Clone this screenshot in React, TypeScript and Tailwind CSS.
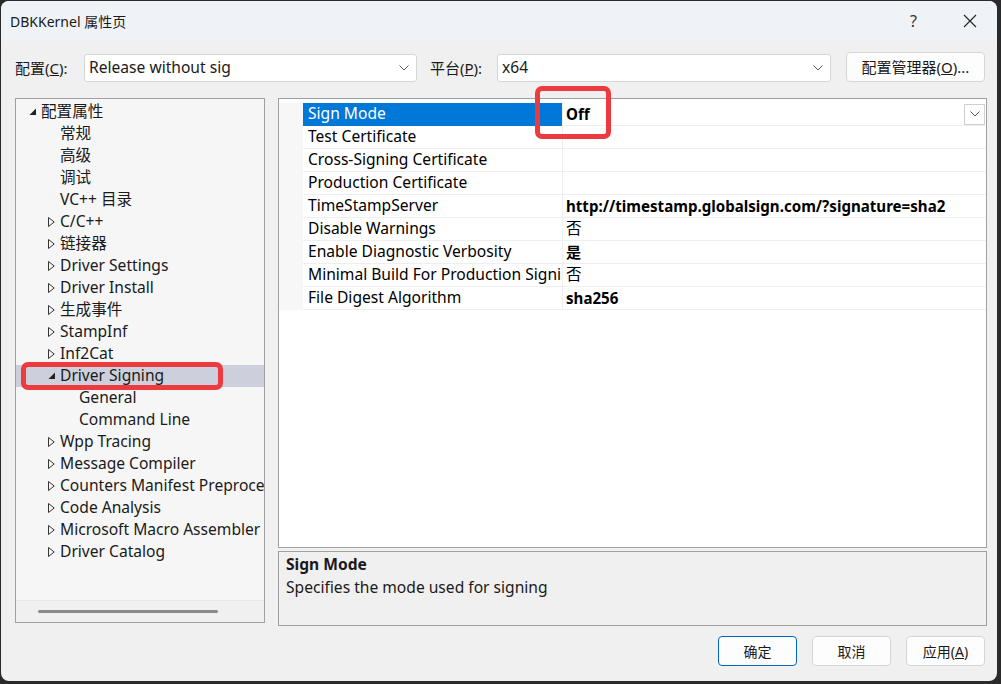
import React from "react"

const FONT = "font-['Segoe_UI','Noto_Sans','Noto_Sans_CJK_SC',sans-serif]"

interface TreeItem {
  label: string
  depth: 0 | 1 | 2
  arrow?: "open" | "closed"
  selected?: boolean
}

const TREE: TreeItem[] = [
  { label: "配置属性", depth: 0, arrow: "open" },
  { label: "常规", depth: 1 },
  { label: "高级", depth: 1 },
  { label: "调试", depth: 1 },
  { label: "VC++ 目录", depth: 1 },
  { label: "C/C++", depth: 1, arrow: "closed" },
  { label: "链接器", depth: 1, arrow: "closed" },
  { label: "Driver Settings", depth: 1, arrow: "closed" },
  { label: "Driver Install", depth: 1, arrow: "closed" },
  { label: "生成事件", depth: 1, arrow: "closed" },
  { label: "StampInf", depth: 1, arrow: "closed" },
  { label: "Inf2Cat", depth: 1, arrow: "closed" },
  { label: "Driver Signing", depth: 1, arrow: "open", selected: true },
  { label: "General", depth: 2 },
  { label: "Command Line", depth: 2 },
  { label: "Wpp Tracing", depth: 1, arrow: "closed" },
  { label: "Message Compiler", depth: 1, arrow: "closed" },
  { label: "Counters Manifest Preprocessor", depth: 1, arrow: "closed" },
  { label: "Code Analysis", depth: 1, arrow: "closed" },
  { label: "Microsoft Macro Assembler", depth: 1, arrow: "closed" },
  { label: "Driver Catalog", depth: 1, arrow: "closed" },
]

const INDENT = ["pl-[13px]", "pl-[32px]", "pl-[51px]"]

interface Prop {
  name: string
  value: string
  bold?: boolean
}

const PROPS: Prop[] = [
  { name: "Sign Mode", value: "Off", bold: true },
  { name: "Test Certificate", value: "" },
  { name: "Cross-Signing Certificate", value: "" },
  { name: "Production Certificate", value: "" },
  { name: "TimeStampServer", value: "http://timestamp.globalsign.com/?signature=sha2", bold: true },
  { name: "Disable Warnings", value: "否" },
  { name: "Enable Diagnostic Verbosity", value: "是", bold: true },
  { name: "Minimal Build For Production Signing", value: "否" },
  { name: "File Digest Algorithm", value: "sha256", bold: true },
]

const Chevron = ({ className = "" }: { className?: string }) => (
  <svg width="10" height="6" viewBox="0 0 10 6" className={className}>
    <path d="M0.5 0.5 L5 5 L9.5 0.5" fill="none" stroke="#555" strokeWidth="1" />
  </svg>
)

const Arrow = ({ kind }: { kind?: "open" | "closed" }) => {
  if (kind === "open")
    return (
      <svg width="8" height="8" viewBox="0 0 8 8">
        <path d="M7 0.5 L7 7 L0.5 7 Z" fill="#222" />
      </svg>
    )
  if (kind === "closed")
    return (
      <svg width="7" height="10" viewBox="0 0 7 10">
        <path d="M0.5 0.5 L6.2 5 L0.5 9.5 Z" fill="none" stroke="#333" strokeWidth="1" />
      </svg>
    )
  return null
}

const Combo = ({ value, w }: { value: string; w: string }) => (
  <div className={`${w} h-[28px] bg-white border border-[#d5d5d5] rounded-[3px] flex items-center pl-[4px] pr-[7px]`}>
    <span className="flex-1 text-[15.6px] text-[#1a1a1a]">{value}</span>
    <Chevron />
  </div>
)

const Btn = ({ children, focus }: { children: React.ReactNode; focus?: boolean }) => (
  <div
    className={`w-[79px] h-[30px] rounded-[4px] flex items-center justify-center text-[14px] text-[#1a1a1a] bg-[#fdfdfd] border ${
      focus ? "border-[#0067c0]" : "border-[#d4d4d4]"
    }`}
  >
    {children}
  </div>
)

export default function App() {
  return (
    <div className={`w-[1001px] h-[684px] bg-[#2a2a2a] pt-px pl-px pr-[4px] pb-[3px] ${FONT}`}>
      <div className="relative h-full rounded-lg bg-[#f0f0f0] flex flex-col overflow-hidden">
        {/* title bar */}
        <div className="h-[40px] shrink-0 bg-[#eff3f8] flex items-center pl-[9px] pr-[20px]">
          <span className="flex-1 text-[14px] text-[#1a1a1a]">DBKKernel 属性页</span>
          <span className="text-[16px] text-[#333] mr-[46px]">?</span>
          <svg width="14" height="14" viewBox="0 0 14 14">
            <path d="M1 1 L13 13 M13 1 L1 13" stroke="#222" strokeWidth="1.1" />
          </svg>
        </div>

        {/* config row */}
        <div className="mt-[11px] h-[30px] flex items-end pl-[14px] text-[15px] text-[#1a1a1a]">
          <span className="w-[69px] h-[28px] flex items-center">
            配置(<span className="underline">C</span>):
          </span>
          <Combo value="Release without sig" w="w-[333px]" />
          <span className="ml-[13px] w-[67px] h-[28px] flex items-center">
            平台(<span className="underline">P</span>):
          </span>
          <Combo value="x64" w="w-[334px]" />
          <div className="ml-[15px] w-[139px] h-[30px] bg-[#fdfdfd] border border-[#d5d5d5] rounded-[4px] flex items-center justify-center">
            配置管理器(<span className="underline">O</span>)...
          </div>
        </div>

        {/* main */}
        <div className="mt-[16px] flex items-start pl-[14px]">
          {/* tree */}
          <div className="w-[250px] h-[525px] border border-[#a0a0a0] bg-[#f6f6f6] flex flex-col">
            <div className="flex-1 pt-[2px] overflow-hidden">
              {TREE.map((t) => (
                <div
                  key={t.label}
                  className={`h-[22px] flex items-center whitespace-nowrap text-[15.6px] text-[#1a1a1a] ${INDENT[t.depth]} ${
                    t.selected ? "bg-[#cdd0dc]" : ""
                  }`}
                >
                  <span className="w-[12px] shrink-0 flex items-center">
                    <Arrow kind={t.arrow} />
                  </span>
                  <span>{t.label}</span>
                </div>
              ))}
            </div>
            <div className="h-[22px] shrink-0 border-t border-[#e8e8e8] bg-[#f0f0f0] flex items-center pl-[22px]">
              <div className="w-[180px] h-[3px] rounded-full bg-[#8a8a8a]" />
            </div>
          </div>

          {/* right side */}
          <div className="ml-[13px] w-[709px] flex flex-col gap-[3px]">
            <div className="h-[450px] border border-[#a0a0a0] bg-white pt-[4px]">
              {PROPS.map((p, i) => (
                <div key={p.name} className="h-[23px] flex text-[15.6px] text-black">
                  <div className="w-[24px] shrink-0 bg-[#f7f7f7]" />
                  <div
                    className={`w-[259px] shrink-0 pl-[5px] flex items-center whitespace-nowrap overflow-hidden border-b ${
                      i === 0 ? "bg-[#0078d7] text-white border-[#0078d7]" : "border-[#efefef]"
                    }`}
                  >
                    {p.name}
                  </div>
                  <div
                    className={`flex-1 pl-[3px] flex items-center whitespace-nowrap border-l border-b border-[#efefef] ${
                      p.bold ? "font-bold text-[15.1px]" : ""
                    }`}
                  >
                    <span className="flex-1">{p.value}</span>
                    {i === 0 && (
                      <div className="mr-px w-[21px] h-[21px] border border-[#cfcfcf] bg-white flex items-center justify-center">
                        <Chevron />
                      </div>
                    )}
                  </div>
                </div>
              ))}
            </div>
            <div className="h-[75px] border border-[#a0a0a0] bg-[#f0f0f0] pl-[7px] pt-px text-[15.6px] text-[#1a1a1a]">
              <div className="font-bold h-[23px] flex items-center">Sign Mode</div>
              <div className="h-[23px] flex items-center">Specifies the mode used for signing</div>
            </div>
          </div>
        </div>

        {/* buttons */}
        <div className="mt-[10px] flex justify-end gap-[15px] pr-[12px]">
          <Btn focus>确定</Btn>
          <Btn>取消</Btn>
          <Btn>
            应用(<span className="underline">A</span>)
          </Btn>
        </div>

        {/* annotation boxes */}
        <div className="absolute left-[534px] top-[85px] w-[76px] h-[53px] border-[5px] border-[#ec3a3f] rounded-[7px]" />
        <div className="absolute left-[20px] top-[361px] w-[202px] h-[28px] border-[5px] border-[#ec3a3f] rounded-[7px]" />
      </div>
    </div>
  )
}
